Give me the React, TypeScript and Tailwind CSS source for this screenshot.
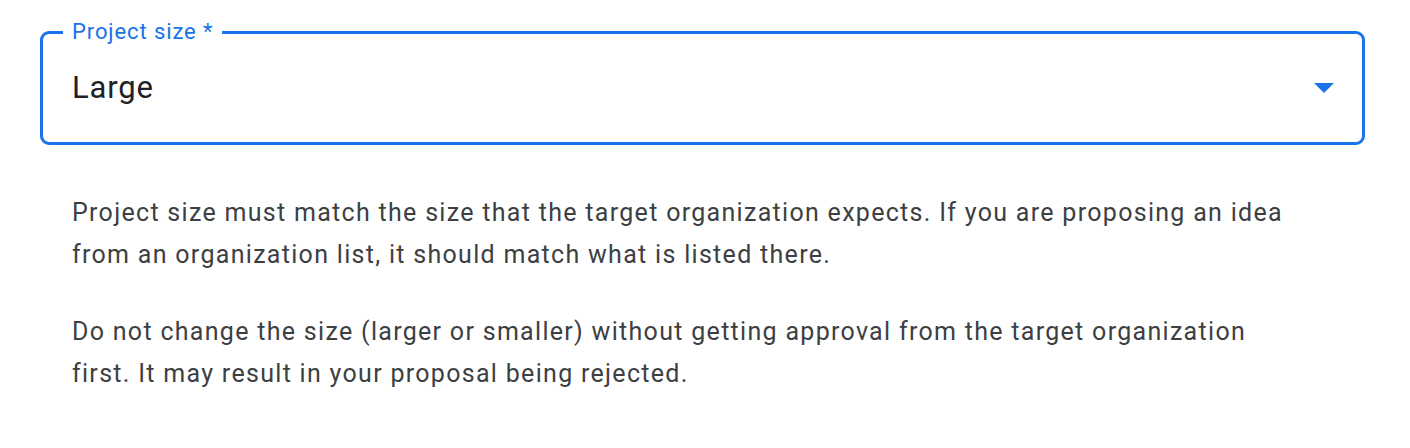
import React from 'react';

const App: React.FC = () => {
  return (
    <div className="min-h-screen bg-white pl-[40px] pr-[45px] pt-[20px] font-['Roboto',sans-serif]">
      {/* Select field */}
      <fieldset className="relative h-[125px] rounded-[9px] border-[3px] border-[#1a73e8]">
        <legend className="ml-[20px] px-[9px] text-[22px] leading-[24px] tracking-[0.9px] text-[#1a73e8]">
          Project size *
        </legend>
        <div className="flex h-[88px] items-center justify-between pl-[29px] pr-[28px]">
          <span className="text-[31px] tracking-[0.8px] text-[#202124]">Large</span>
          <svg width="20" height="10" viewBox="0 0 20 10">
            <path d="M0 0h20L10 10z" fill="#1a73e8" />
          </svg>
        </div>
      </fieldset>

      {/* Help text */}
      <div className="mt-[47px] max-w-[1254px] pl-[32px] text-[25px] leading-[42px] tracking-[1.3px] text-[#3c4043]">
        <p>
          Project size must match the size that the target organization expects. If you are
          proposing an idea from an organization list, it should match what is listed there.
        </p>
        <p className="mt-[35px]">
          Do not change the size (larger or smaller) without getting approval from the target
          organization first. It may result in your proposal being rejected.
        </p>
      </div>
    </div>
  );
};

export default App;
